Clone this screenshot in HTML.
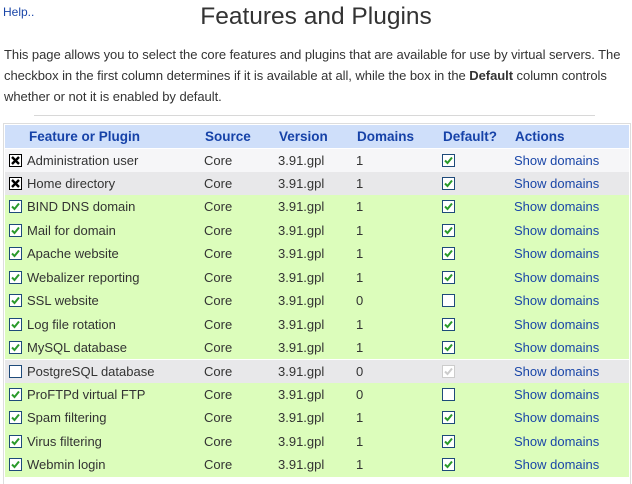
<!DOCTYPE html>
<html><head><meta charset="utf-8"><style>
body{margin:0;width:632px;height:475px;overflow:hidden;background:#fff;font-family:"Liberation Sans",Arial,sans-serif;color:#333;position:relative}
.a{position:absolute;white-space:nowrap}
#help{left:3px;top:5px;font-size:12px;color:#1a46a8}
#title{left:0;width:632px;text-align:center;top:3px;font-size:24.5px;color:#333}
#p{left:4px;top:44px;font-size:13px;line-height:21px;width:626px;white-space:normal;letter-spacing:-0.05px}
#hr{left:34px;top:115px;width:561px;height:1px;background:#d8d8d8}
#tbl{left:3px;top:123px;width:626px;height:360px;border:1px solid #ddd;border-bottom:none}
.row{position:absolute;left:1px;width:624px;height:23.4px;font-size:13px;line-height:23px}
.row span{position:absolute}
.hd{background:#cfdffa;color:#1642a8;font-weight:bold;font-size:13.5px}
.g{background:#dcfdbb}.gr{background:#e8e8ea}.w{background:#f6f6f8}
.cb{position:absolute;width:11px;height:11px;border:1px solid #1e4a7a;background:#fff;top:5px}
.cb svg{position:absolute;left:0;top:0}
.lk{color:#1a46a8}
</style></head><body>
<div class="a" id="help">Help..</div>
<div class="a" id="title">Features and Plugins</div>
<div class="a" id="p">This page allows you to select the core features and plugins that are available for use by virtual servers. The checkbox in the first column determines if it is available at all, while the box in the <b>Default</b> column controls whether or not it is enabled by default.</div>
<div class="a" id="hr"></div>
<div class="a" id="tbl">
<div class="row hd" style="top:1px"><span style="left:24px">Feature or Plugin</span><span style="left:200px">Source</span><span style="left:274px">Version</span><span style="left:352px">Domains</span><span style="left:438px">Default?</span><span style="left:510px">Actions</span></div>
</div>
<script>
var rows=[["Administration user","1","x","w",1],["Home directory","1","x","gr",1],["BIND DNS domain","1","c","g",1],["Mail for domain","1","c","g",1],["Apache website","1","c","g",1],["Webalizer reporting","1","c","g",1],["SSL website","0","c","g",0],["Log file rotation","1","c","g",1],["MySQL database","1","c","g",1],["PostgreSQL database","0","e","gr",2],["ProFTPd virtual FTP","0","c","g",0],["Spam filtering","1","c","g",1],["Virus filtering","1","c","g",1],["Webmin login","1","c","g",1]];
var ck='<svg width="11" height="11"><path d="M2 5.5L4.5 8L9 2.5" stroke="#2a9a2a" stroke-width="2" fill="none"/></svg>';
var ckg='<svg width="11" height="11"><path d="M2 5.5L4.5 8L9 2.5" stroke="#ccc" stroke-width="2" fill="none"/></svg>';
var xx='<svg width="11" height="11"><path d="M2 2L9 9M9 2L2 9" stroke="#000" stroke-width="2.4"/></svg>';
var h='';
rows.forEach(function(r,i){
var t=24.5+i*23.45;
var f=r[2]=='x'?'<div class="cb" style="left:4px;border-color:#000">'+xx+'</div>':r[2]=='e'?'<div class="cb" style="left:4px"></div>':'<div class="cb" style="left:4px">'+ck+'</div>';
var d=r[4]==1?'<div class="cb" style="left:437px">'+ck+'</div>':r[4]==2?'<div class="cb" style="left:437px;border-color:#ccc">'+ckg+'</div>':'<div class="cb" style="left:437px"></div>';
h+='<div class="row '+r[3]+'" style="top:'+t+'px">'+f+'<span style="left:22px">'+r[0]+'</span><span style="left:199px">Core</span><span style="left:273px">3.91.gpl</span><span style="left:351px">'+r[1]+'</span>'+d+'<span class="lk" style="left:509px">Show domains</span></div>';
});
document.getElementById('tbl').insertAdjacentHTML('beforeend',h);
</script>
</body></html>
